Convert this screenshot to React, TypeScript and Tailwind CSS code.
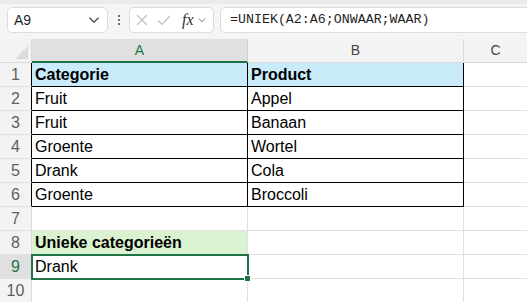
import React from "react";

const sans = "font-['Liberation_Sans',Arial,sans-serif]";

type Row = {
  n: number;
  a?: string;
  b?: string;
  bold?: boolean;
  blue?: boolean;
  boxed?: boolean;
  green?: boolean;
  selected?: boolean;
};

const rows: Row[] = [
  { n: 1, a: "Categorie", b: "Product", bold: true, blue: true, boxed: true },
  { n: 2, a: "Fruit", b: "Appel", boxed: true },
  { n: 3, a: "Fruit", b: "Banaan", boxed: true },
  { n: 4, a: "Groente", b: "Wortel", boxed: true },
  { n: 5, a: "Drank", b: "Cola", boxed: true },
  { n: 6, a: "Groente", b: "Broccoli", boxed: true },
  { n: 7 },
  { n: 8, a: "Unieke categorieën", bold: true, green: true },
  { n: 9, a: "Drank", selected: true },
  { n: 10 },
];

function Chevron({ className }: { className?: string }) {
  return (
    <svg viewBox="0 0 12 8" className={className} fill="none" stroke="currentColor" strokeWidth="1.3">
      <path d="M1.5 1.8 L6 6.2 L10.5 1.8" />
    </svg>
  );
}

function Toolbar() {
  return (
    <div className="flex h-[39px] flex-col bg-[#f5f5f5]">
      <div className="h-[4px] bg-[#ebebeb]" />
      <div className="flex items-start pt-[3px]">
        <div className="ml-[7px] flex h-[26px] w-[101px] items-center justify-between rounded-[5px] border border-[#dcdcdc] bg-white pl-[6px] pr-[7px]">
          <span className={`${sans} text-[14px] text-[#1f1f1f]`}>A9</span>
          <Chevron className="h-[8px] w-[12px] text-[#444]" />
        </div>
        <div className="flex h-[26px] w-[21px] flex-col items-center justify-center gap-[2px]">
          <span className="h-[2px] w-[2px] rounded-full bg-[#444]" />
          <span className="h-[2px] w-[2px] rounded-full bg-[#444]" />
          <span className="h-[2px] w-[2px] rounded-full bg-[#444]" />
        </div>
        <div className="flex h-[26px] w-[85px] items-center rounded-[5px] border border-[#dcdcdc] bg-white pl-[6px]">
          <svg viewBox="0 0 12 12" className="h-[12px] w-[12px] text-[#bdbdbd]" fill="none" stroke="currentColor" strokeWidth="1.1">
            <path d="M1 1 L11 11 M11 1 L1 11" />
          </svg>
          <svg viewBox="0 0 14 11" className="ml-[9px] h-[11px] w-[14px] text-[#bdbdbd]" fill="none" stroke="currentColor" strokeWidth="1.1">
            <path d="M1 5.5 L5 9.5 L13 1" />
          </svg>
          <span className="ml-[11px] font-['Liberation_Serif',serif] text-[16px] italic leading-none text-[#333]">
            fx
          </span>
          <Chevron className="ml-[3px] h-[6px] w-[10px] text-[#777]" />
        </div>
        <div className="ml-[6px] flex h-[26px] flex-1 items-center rounded-l-[5px] border border-r-0 border-[#dcdcdc] bg-white pl-[9px]">
          <span className="font-['Liberation_Mono',monospace] text-[13.3px] text-[#1f1f1f]">
            =UNIEK(A2:A6;ONWAAR;WAAR)
          </span>
        </div>
      </div>
    </div>
  );
}

function HeaderRow() {
  return (
    <div className={`flex h-[24px] bg-[#f3f3f3] ${sans} text-[14px]`}>
      <div className="relative h-full w-[32px] border-r border-b border-[#dadada]">
        <svg viewBox="0 0 10 10" className="absolute bottom-[3px] right-[3px] h-[13px] w-[13px]">
          <path d="M10 0 L10 10 L0 10 Z" fill="#dcdcdc" />
        </svg>
      </div>
      <div className="flex h-full w-[216px] items-center justify-center border-r border-b-2 border-r-[#cfcfcf] border-b-[#217346] bg-[#e0e0e0] text-[#217346]">
        A
      </div>
      <div className="flex h-full w-[216px] items-center justify-center border-r border-b border-[#dadada] text-[#444]">
        B
      </div>
      <div className="flex h-full flex-1 items-center justify-center border-b border-[#dadada] text-[#444]">
        C
      </div>
    </div>
  );
}

function SheetRow({ row }: { row: Row }) {
  const edge = row.boxed ? "border-black" : "border-[#e1e1e1]";
  const fill = row.blue ? "bg-[#c9ebfa]" : row.green ? "bg-[#daf2d0]" : "bg-white";
  return (
    <div className={`relative flex h-[24px] ${sans} text-[16px] ${row.selected ? "z-10" : ""}`}>
      <div
        className={`flex h-full w-[32px] items-center justify-center border-r border-b ${
          row.boxed ? "border-r-black" : "border-r-[#dadada]"
        } border-b-[#e1e1e1] text-[16px] ${row.selected ? "bg-[#e0e0e0] text-[#217346]" : "bg-[#f3f3f3] text-[#5f5f5f]"}`}
      >
        {row.n}
      </div>
      <div
        className={`relative flex h-full w-[216px] items-center border-r border-b pl-[3px] text-black ${edge} ${fill} ${
          row.bold ? "font-bold" : ""
        } ${row.green ? "border-r-[#e1e1e1]" : ""}`}
      >
        {row.a}
        {row.selected && (
          <>
            <div className="pointer-events-none absolute -left-[1px] -top-[1px] h-[26px] w-[218px] border-2 border-[#217346]" />
            <div className="absolute -bottom-[4px] -right-[4px] h-[7px] w-[7px] border border-white bg-[#217346]" />
          </>
        )}
      </div>
      <div
        className={`flex h-full w-[216px] items-center border-r border-b pl-[3px] text-black ${edge} ${
          row.blue ? "bg-[#c9ebfa]" : "bg-white"
        } ${row.bold ? "font-bold" : ""}`}
      >
        {row.b}
      </div>
      <div className="h-full flex-1 border-b border-[#e1e1e1] bg-white" />
    </div>
  );
}

export default function App() {
  return (
    <div className="h-[302px] w-[527px] overflow-hidden bg-white">
      <Toolbar />
      <HeaderRow />
      {rows.map((row) => (
        <SheetRow key={row.n} row={row} />
      ))}
    </div>
  );
}
